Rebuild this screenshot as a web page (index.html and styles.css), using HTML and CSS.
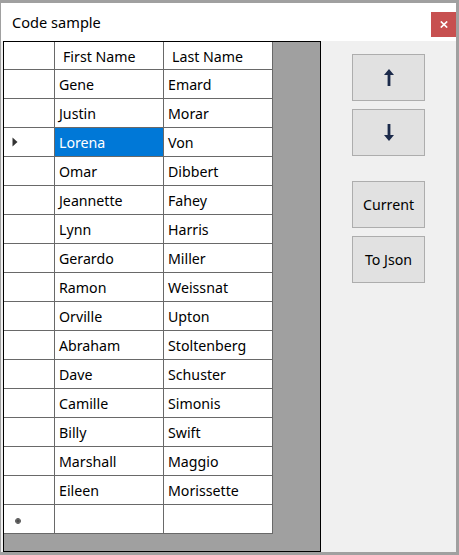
FILE: index.html
```html
<!DOCTYPE html>
<html>
<head>
<meta charset="utf-8">
<link rel="stylesheet" href="styles.css">
</head>
<body>
<div class="window">
  <div class="titlebar">
    <span class="title">Code sample</span>
    <div class="close">
      <svg width="8" height="7" viewBox="0 0 8 7"><path d="M0.8 0.5 L7.2 6.5 M7.2 0.5 L0.8 6.5" stroke="#fff" stroke-width="1.7"/></svg>
    </div>
  </div>
  <div class="content">
    <div class="grid">
      <div class="table">
        <div class="rh hdr"></div><div class="hc">First Name</div><div class="hc">Last Name</div>
        <div class="rh"></div><div class="c">Gene</div><div class="c">Emard</div>
        <div class="rh"></div><div class="c">Justin</div><div class="c">Morar</div>
        <div class="rh"><svg width="6" height="10" viewBox="0 0 6 10"><path d="M0.5 0.5 L5.5 5 L0.5 9.5 Z" fill="#333"/></svg></div><div class="c sel">Lorena</div><div class="c">Von</div>
        <div class="rh"></div><div class="c">Omar</div><div class="c">Dibbert</div>
        <div class="rh"></div><div class="c">Jeannette</div><div class="c">Fahey</div>
        <div class="rh"></div><div class="c">Lynn</div><div class="c">Harris</div>
        <div class="rh"></div><div class="c">Gerardo</div><div class="c">Miller</div>
        <div class="rh"></div><div class="c">Ramon</div><div class="c">Weissnat</div>
        <div class="rh"></div><div class="c">Orville</div><div class="c">Upton</div>
        <div class="rh"></div><div class="c">Abraham</div><div class="c">Stoltenberg</div>
        <div class="rh"></div><div class="c">Dave</div><div class="c">Schuster</div>
        <div class="rh"></div><div class="c">Camille</div><div class="c">Simonis</div>
        <div class="rh"></div><div class="c">Billy</div><div class="c">Swift</div>
        <div class="rh"></div><div class="c">Marshall</div><div class="c">Maggio</div>
        <div class="rh"></div><div class="c">Eileen</div><div class="c">Morissette</div>
        <div class="rh newrow"><svg width="6" height="6" viewBox="0 0 6 6"><path d="M2 0 H4 L6 2 V4 L4 6 H2 L0 4 V2 Z" fill="#6a6a6a"/><path d="M1.5 3 H4.5 M3 1.5 V4.5" stroke="#444" stroke-width="1"/></svg></div><div class="c"></div><div class="c"></div>
      </div>
    </div>
    <div class="panel">
      <div class="group">
        <div class="btn"><svg width="10" height="17" viewBox="0 0 10 17"><path d="M5 0 L10 6 H6.4 V17 H3.6 V6 H0 Z" fill="#1b2a4a"/></svg></div>
        <div class="btn"><svg width="10" height="17" viewBox="0 0 10 17"><path d="M5 17 L10 11 H6.4 V0 H3.6 V11 H0 Z" fill="#1b2a4a"/></svg></div>
      </div>
      <div class="group">
        <div class="btn">Current</div>
        <div class="btn">To Json</div>
      </div>
    </div>
  </div>
</div>
</body>
</html>
```

FILE: styles.css
```css
html, body {
  margin: 0;
  padding: 0;
  background: #a0a0a0;
}
body {
  width: 459px;
  height: 555px;
  overflow: hidden;
  font-family: "Noto Sans", "Open Sans", sans-serif;
}
.window {
  box-sizing: border-box;
  width: 459px;
  height: 555px;
  border-style: solid;
  border-color: #a0a0a0;
  border-width: 3px 3px 3px 1px;
  display: flex;
  flex-direction: column;
}
.titlebar {
  height: 38px;
  background: #fff;
  display: flex;
  align-items: flex-start;
  justify-content: space-between;
}
.title {
  margin-left: 11px;
  margin-top: 9px;
  font-size: 14.6px;
  line-height: 20px;
  color: #000;
}
.close {
  margin-top: 9px;
  width: 25px;
  height: 25px;
  background: #c75050;
  display: flex;
  align-items: center;
  justify-content: center;
}
.content {
  height: 511px;
  background: #f0f0f0;
  display: flex;
}
.grid {
  box-sizing: border-box;
  margin-left: 2px;
  width: 318px;
  height: 511px;
  border: 1px solid #000;
  background: #a0a0a0;
}
.table {
  display: grid;
  grid-template-columns: 51px 109px 109px;
  grid-template-rows: 28px;
  grid-auto-rows: 29px;
  width: 269px;
  font-size: 14.2px;
  color: #000;
}
.table > div {
  box-sizing: border-box;
  background: #fff;
  border-right: 1px solid #696969;
  border-bottom: 1px solid #696969;
  display: flex;
  align-items: center;
  white-space: nowrap;
}
.hc {
  padding-left: 8px;
  padding-top: 2px;
}
.c {
  padding-left: 4px;
}
.rh {
  padding-left: 8px;
}
.rh.newrow {
  padding-left: 11px;
  padding-top: 3px;
}
.table > .sel {
  background: #0078d7;
  color: #fff;
}
.panel {
  margin-left: 31px;
  padding-top: 13px;
  display: flex;
  flex-direction: column;
  gap: 25px;
}
.group {
  display: flex;
  flex-direction: column;
  gap: 8px;
}
.btn {
  box-sizing: border-box;
  width: 73px;
  height: 47px;
  background: #e1e1e1;
  border: 1px solid #adadad;
  display: flex;
  align-items: center;
  justify-content: center;
  font-size: 14.2px;
  color: #000;
}
```
